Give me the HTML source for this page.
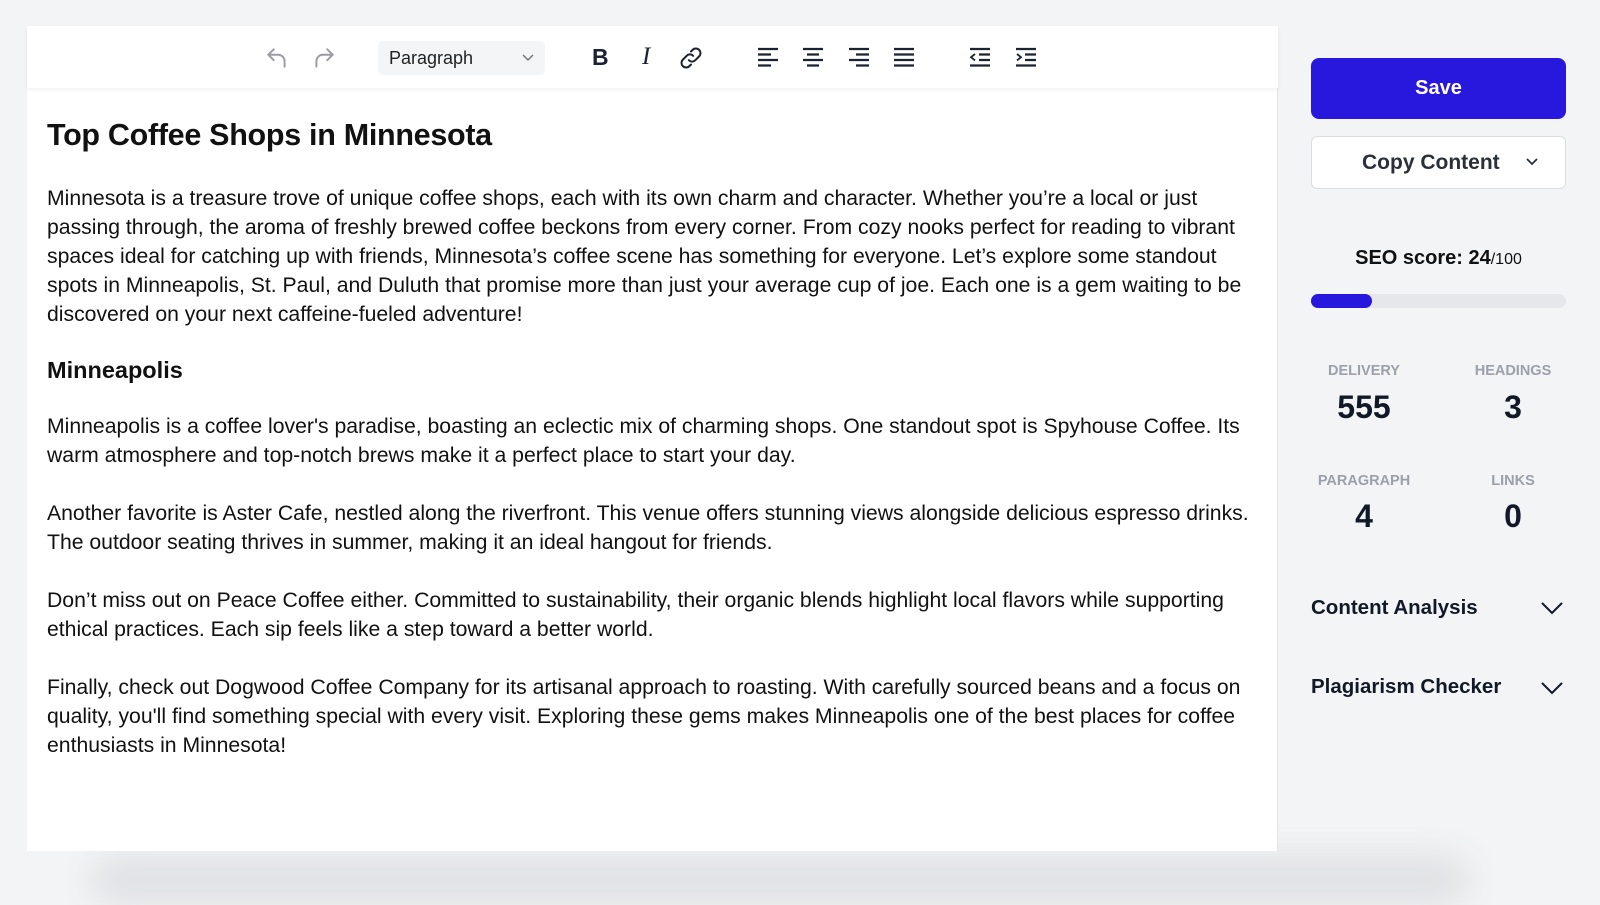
<!DOCTYPE html>
<html><head><meta charset="utf-8"><style>
*{margin:0;padding:0;box-sizing:border-box}
body{width:1600px;height:878px;background:#f3f4f6;position:relative;overflow:hidden;font-family:"Liberation Sans",sans-serif;color:#111}
.shadow{position:absolute;left:90px;top:855px;width:1380px;height:50px;background:#e0e1e4;filter:blur(16px);border-radius:40px}
.ed{position:absolute;left:27px;top:26px;width:1251px;height:825px;background:#fff;border-right:1px solid #e3e4e8}
.tb{position:absolute;left:0;top:0;width:1251px;height:62px;background:#fff;box-shadow:0 2px 4px rgba(0,0,0,.06)}
.ic{position:absolute;top:19px}
.sel{position:absolute;left:351px;top:15px;width:167px;height:34px;background:#f4f5f7;border-radius:5px;font-size:18px;color:#222;line-height:34px;padding-left:11px}
.txt{position:absolute;left:20px;font-size:21.2px;color:#111}
.ln{height:29px;line-height:29px;white-space:nowrap}
h1{position:absolute;left:20px;top:114px;font-size:30.5px;font-weight:bold;letter-spacing:-.3px}
h2{position:absolute;left:20px;top:355px;font-size:23.5px;font-weight:bold}
.save{position:absolute;left:1311px;top:58px;width:255px;height:61px;background:#2817dc;border-radius:8px;color:#fff;font-weight:bold;font-size:20px;text-align:center;line-height:61px}
.copy{position:absolute;left:1311px;top:136px;width:255px;height:53px;background:#fff;border:1px solid #dcdde2;border-radius:6px;font-size:21px;font-weight:bold;color:#2a2f3a;line-height:51px;padding-left:50px}
.seo{position:absolute;left:1311px;width:255px;top:247px;text-align:center;font-size:20px;font-weight:bold}
.bar{position:absolute;left:1311px;top:294px;width:255px;height:14px;background:#e6e7eb;border-radius:7px}
.bar i{position:absolute;left:0;top:0;width:61px;height:14px;background:#2817dc;border-radius:7px}
.lab{position:absolute;width:160px;text-align:center;font-size:14.5px;font-weight:bold;color:#9ca0aa}
.num{position:absolute;width:160px;text-align:center;font-size:32px;font-weight:bold;color:#111827}
.acc{position:absolute;left:1311px;font-size:20.5px;font-weight:bold;color:#111827}
</style></head><body>
<div class="shadow"></div>
<div class="ed">
<div class="tb">
<svg class="ic" style="left:237px" width="26" height="26" viewBox="0 0 24 24" fill="none" stroke="#9a9ca3" stroke-width="1.8" stroke-linecap="round" stroke-linejoin="round"><path d="M9 14L4 9l5-5"/><path d="M4 9h9a6 6 0 0 1 6 6v5"/></svg>
<svg class="ic" style="left:284px" width="26" height="26" viewBox="0 0 24 24" fill="none" stroke="#9a9ca3" stroke-width="1.8" stroke-linecap="round" stroke-linejoin="round"><path d="M15 14l5-5-5-5"/><path d="M20 9h-9a6 6 0 0 0-6 6v5"/></svg>
<div class="sel">Paragraph<svg style="position:absolute;right:10px;top:12px" width="14" height="10" viewBox="0 0 14 10" fill="none" stroke="#777" stroke-width="1.5"><path d="M2 2l5 5 5-5"/></svg></div>
<div style="position:absolute;left:565px;top:18px;font-size:23px;font-weight:bold;color:#1b2230">B</div>
<div style="position:absolute;left:615px;top:17px;font-size:25px;font-style:italic;font-family:'Liberation Serif',serif;color:#1b2230">I</div>
<svg class="ic" style="left:651px" width="26" height="26" viewBox="0 0 24 24" fill="none" stroke="#1b2230" stroke-width="1.8" stroke-linecap="round"><path d="M10 14a4 4 0 0 0 6 0l3.5-3.5a4 4 0 0 0-6-6L12 6"/><path d="M14 10a4 4 0 0 0-6 0l-3.5 3.5a4 4 0 0 0 6 6L12 18"/></svg>
<svg class="ic" style="left:729px" width="24" height="24" viewBox="0 0 24 24" stroke="#1b2230" stroke-width="2.2"><path d="M2 4h20M2 9.5h13M2 15h20M2 20.5h13"/></svg>
<svg class="ic" style="left:774px" width="24" height="24" viewBox="0 0 24 24" stroke="#1b2230" stroke-width="2.2"><path d="M2 4h20M6 9.5h12M2 15h20M6 20.5h12"/></svg>
<svg class="ic" style="left:820px" width="24" height="24" viewBox="0 0 24 24" stroke="#1b2230" stroke-width="2.2"><path d="M2 4h20M9 9.5h13M2 15h20M9 20.5h13"/></svg>
<svg class="ic" style="left:865px" width="24" height="24" viewBox="0 0 24 24" stroke="#1b2230" stroke-width="2.2"><path d="M2 4h20M2 9.5h20M2 15h20M2 20.5h20"/></svg>
<svg class="ic" style="left:941px" width="24" height="24" viewBox="0 0 24 24" fill="none" stroke="#1b2230" stroke-width="2.2"><path d="M2 4h20M11 9.5h11M11 15h11M2 20.5h20"/><path d="M7 9l-4 3.2 4 3.2" stroke-width="1.8"/></svg>
<svg class="ic" style="left:987px" width="24" height="24" viewBox="0 0 24 24" fill="none" stroke="#1b2230" stroke-width="2.2"><path d="M2 4h20M11 9.5h11M11 15h11M2 20.5h20"/><path d="M3 9l4 3.2-4 3.2" stroke-width="1.8"/></svg>
</div>
<h1 style="top:92px">Top Coffee Shops in Minnesota</h1>
<div class="txt" style="top:158px">
<div class="ln">Minnesota is a treasure trove of unique coffee shops, each with its own charm and character. Whether you’re a local or just</div>
<div class="ln">passing through, the aroma of freshly brewed coffee beckons from every corner. From cozy nooks perfect for reading to vibrant</div>
<div class="ln">spaces ideal for catching up with friends, Minnesota’s coffee scene has something for everyone. Let’s explore some standout</div>
<div class="ln">spots in Minneapolis, St. Paul, and Duluth that promise more than just your average cup of joe. Each one is a gem waiting to be</div>
<div class="ln">discovered on your next caffeine-fueled adventure!</div>
</div>
<h2 style="top:331px">Minneapolis</h2>
<div class="txt" style="top:386px">
<div class="ln">Minneapolis is a coffee lover's paradise, boasting an eclectic mix of charming shops. One standout spot is Spyhouse Coffee. Its</div>
<div class="ln">warm atmosphere and top-notch brews make it a perfect place to start your day.</div>
</div>
<div class="txt" style="top:473px">
<div class="ln">Another favorite is Aster Cafe, nestled along the riverfront. This venue offers stunning views alongside delicious espresso drinks.</div>
<div class="ln">The outdoor seating thrives in summer, making it an ideal hangout for friends.</div>
</div>
<div class="txt" style="top:560px">
<div class="ln">Don’t miss out on Peace Coffee either. Committed to sustainability, their organic blends highlight local flavors while supporting</div>
<div class="ln">ethical practices. Each sip feels like a step toward a better world.</div>
</div>
<div class="txt" style="top:647px">
<div class="ln">Finally, check out Dogwood Coffee Company for its artisanal approach to roasting. With carefully sourced beans and a focus on</div>
<div class="ln">quality, you'll find something special with every visit. Exploring these gems makes Minneapolis one of the best places for coffee</div>
<div class="ln">enthusiasts in Minnesota!</div>
</div>
</div>
<div class="save">Save</div>
<div class="copy">Copy Content<svg style="position:absolute;right:26px;top:20px" width="14" height="10" viewBox="0 0 14 10" fill="none" stroke="#2a2f3a" stroke-width="1.8"><path d="M2 2l5 5 5-5"/></svg></div>
<div class="seo">SEO score: 24<span style="font-weight:normal;font-size:16px">/100</span></div>
<div class="bar"><i></i></div>
<div class="lab" style="left:1284px;top:363px">DELIVERY</div>
<div class="lab" style="left:1433px;top:363px">HEADINGS</div>
<div class="num" style="left:1284px;top:389px">555</div>
<div class="num" style="left:1433px;top:389px">3</div>
<div class="lab" style="left:1284px;top:473px">PARAGRAPH</div>
<div class="lab" style="left:1433px;top:473px">LINKS</div>
<div class="num" style="left:1284px;top:498px">4</div>
<div class="num" style="left:1433px;top:498px">0</div>
<div class="acc" style="top:596px">Content Analysis</div>
<div class="acc" style="top:675px">Plagiarism Checker</div>
<svg style="position:absolute;left:1540px;top:601px" width="24" height="14" viewBox="0 0 24 14" fill="none" stroke="#111827" stroke-width="2"><path d="M2 2l10 10 10-10"/></svg>
<svg style="position:absolute;left:1540px;top:681px" width="24" height="14" viewBox="0 0 24 14" fill="none" stroke="#111827" stroke-width="2"><path d="M2 2l10 10 10-10"/></svg>
</body></html>
